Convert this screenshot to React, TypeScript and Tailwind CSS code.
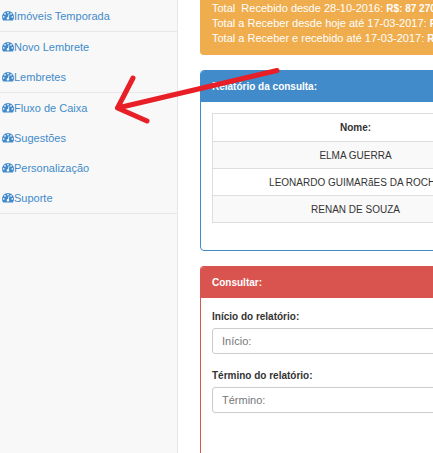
import * as React from "react"

const MENU_GROUPS = [
  ["Imóveis Temporada"],
  ["Novo Lembrete", "Lembretes"],
  ["Fluxo de Caixa", "Sugestões", "Personalização", "Suporte"],
]

const TOTALS = [
  { label: "Total  Recebido desde 28-10-2016: ", value: "R$: 87 270" },
  { label: "Total a Receber desde hoje até 17-03-2017: ", value: "R$" },
  { label: "Total a Receber e recebido até 17-03-2017: ", value: "R$" },
]

const NAMES = ["ELMA GUERRA", "LEONARDO GUIMARãES DA ROCHA", "RENAN DE SOUZA"]

const FIELDS = [
  { id: "inicio", label: "Início do relatório:", placeholder: "Início:" },
  { id: "termino", label: "Término do relatório:", placeholder: "Término:" },
]

function DashboardIcon() {
  return (
    <svg
      viewBox="0 110 1792 1792"
      fill="currentColor"
      aria-hidden="true"
      className="size-3 shrink-0"
    >
      <path d="M384 1152q0-53-37.5-90.5t-90.5-37.5-90.5 37.5-37.5 90.5 37.5 90.5 90.5 37.5 90.5-37.5 37.5-90.5zm192-448q0-53-37.5-90.5t-90.5-37.5-90.5 37.5-37.5 90.5 37.5 90.5 90.5 37.5 90.5-37.5 37.5-90.5zm428 481l101-382q6-26-7.5-48.5t-38.5-29.5-48 6.5-30 39.5l-101 382q-60 5-107 43.5t-63 98.5q-20 77 20 146t117 89 146-20 89-117q16-60-6-117t-72-91zm660-33q0-53-37.5-90.5t-90.5-37.5-90.5 37.5-37.5 90.5 37.5 90.5 90.5 37.5 90.5-37.5 37.5-90.5zm-640-640q0-53-37.5-90.5t-90.5-37.5-90.5 37.5-37.5 90.5 37.5 90.5 90.5 37.5 90.5-37.5 37.5-90.5zm448 192q0-53-37.5-90.5t-90.5-37.5-90.5 37.5-37.5 90.5 37.5 90.5 90.5 37.5 90.5-37.5 37.5-90.5zm320 448q0 261-141 483-19 29-54 29h-1402q-35 0-54-29-141-221-141-483 0-182 71-348t191-286 286-191 348-71 348 71 286 191 191 286 71 348z" />
    </svg>
  )
}

function Sidebar() {
  return (
    <nav className="w-[178px] shrink-0 border-r border-[#e7e7e7] bg-[#f8f8f8] pt-px">
      {MENU_GROUPS.map((group) => (
        <ul key={group[0]} className="border-b border-[#e7e7e7]">
          {group.map((item) => (
            <li key={item}>
              <a
                href="#"
                className="flex h-[30px] items-center pl-0.5 text-[#428bca]"
              >
                <DashboardIcon />
                {item}
              </a>
            </li>
          ))}
        </ul>
      ))}
    </nav>
  )
}

function Arrow() {
  return (
    <svg
      viewBox="0 0 168 60"
      fill="none"
      stroke="#e81f27"
      strokeWidth="5"
      strokeLinecap="round"
      strokeLinejoin="round"
      aria-hidden="true"
      className="pointer-events-none absolute left-[113px] top-[66px] h-[60px] w-[168px]"
    >
      <path d="M164 4.500L4.500 42M20 12L4.500 42L34 55" />
    </svg>
  )
}

export default function App() {
  return (
    <div className="relative flex min-h-screen overflow-hidden bg-white font-['Liberation_Sans',Arial,sans-serif] text-[11px] leading-[15px] text-[#333]">
      <Sidebar />

      <main className="flex min-w-[333px] flex-1 flex-col gap-[15px] pl-[22px]">
        <section className="whitespace-pre rounded-b border-b border-[#f0ad4e] bg-[#f0ad4e] px-3 pb-2 pt-px text-white">
          {TOTALS.map((total) => (
            <p key={total.label}>
              {total.label}
              <b className="text-[10px]">{total.value}</b>
            </p>
          ))}
        </section>

        <section className="rounded border border-[#428bca]">
          <h2 className="rounded-t-[3px] bg-[#428bca] px-[11px] py-2 text-[10px] font-bold text-white">
            Relatório da consulta:
          </h2>
          <div className="px-[11px] pb-[27px] pt-[11px]">
            <table className="w-full min-w-[287px] border-collapse whitespace-nowrap text-center text-[10px]">
              <thead>
                <tr className="h-7">
                  <th className="border border-[#ddd]">Nome:</th>
                </tr>
              </thead>
              <tbody>
                {NAMES.map((name) => (
                  <tr key={name} className="h-[27px] odd:bg-[#f9f9f9]">
                    <td className="border border-[#ddd]">{name}</td>
                  </tr>
                ))}
              </tbody>
            </table>
          </div>
        </section>

        <section className="flex-1 rounded-t border border-b-0 border-[#d9534f]">
          <h2 className="rounded-t-[3px] bg-[#d9534f] px-[11px] py-2 text-[10px] font-bold text-white">
            Consultar:
          </h2>
          <form className="flex flex-col gap-[14px] px-[11px] pt-[11px]">
            {FIELDS.map((field) => (
              <div key={field.id} className="flex flex-col gap-1">
                <label htmlFor={field.id} className="text-[10px] font-bold">
                  {field.label}
                </label>
                <input
                  id={field.id}
                  type="text"
                  placeholder={field.placeholder}
                  className="h-[26px] rounded-[3px] border border-[#ccc] px-[9px] placeholder:text-[#777]"
                />
              </div>
            ))}
          </form>
        </section>
      </main>

      <Arrow />
    </div>
  )
}
